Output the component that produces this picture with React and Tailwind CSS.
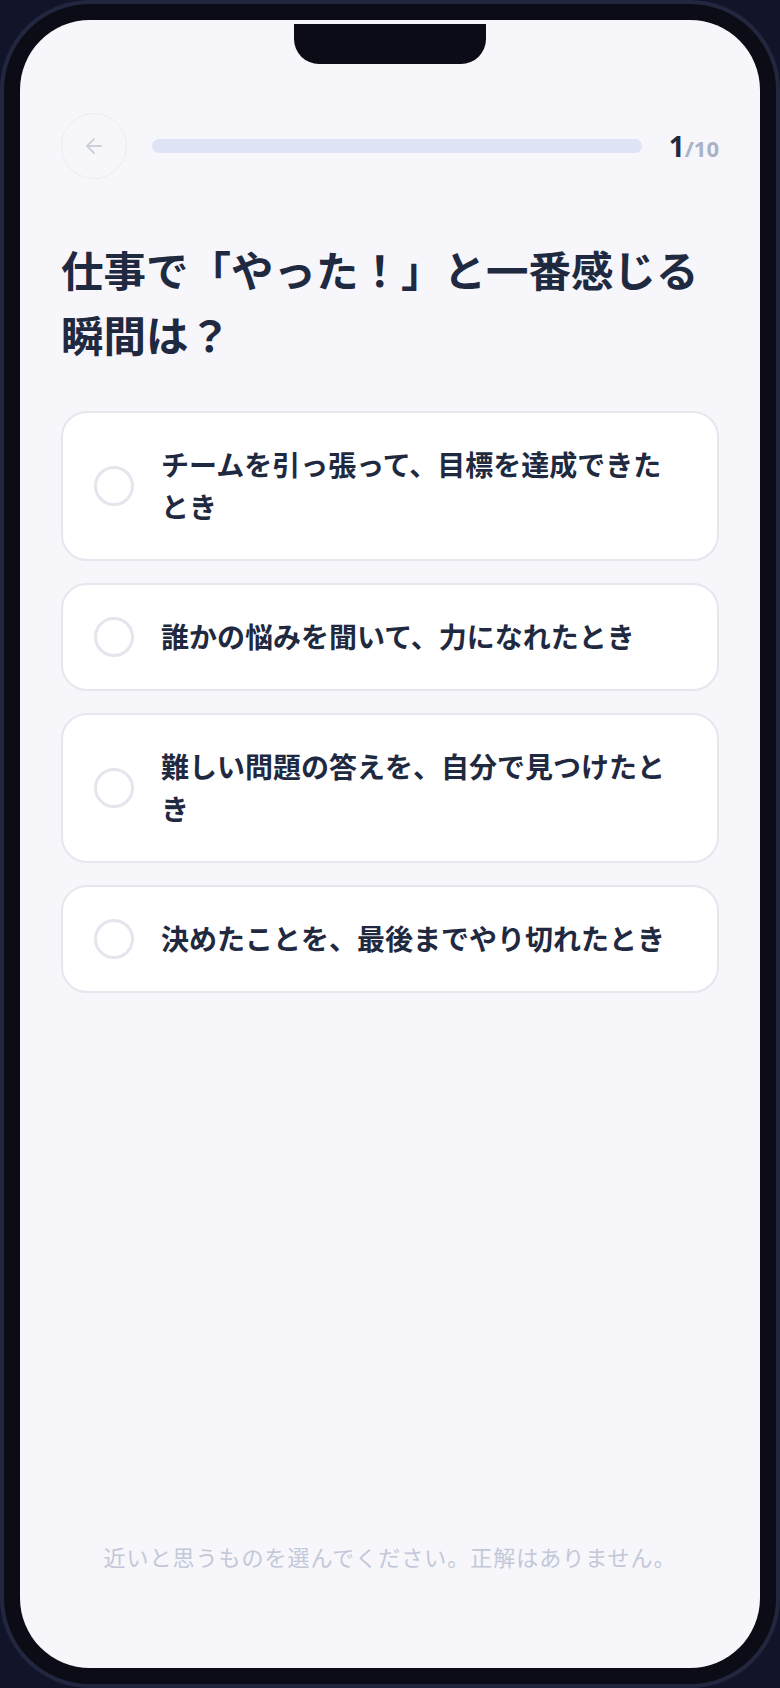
import { ArrowLeft } from "lucide-react";

const options = [
  "チームを引っ張って、目標を達成できたとき",
  "誰かの悩みを聞いて、力になれたとき",
  "難しい問題の答えを、自分で見つけたとき",
  "決めたことを、最後までやり切れたとき",
];

const jp = { fontFamily: '"Noto Sans", "Noto Sans CJK JP", sans-serif' };

function OptionCard({ label }) {
  return (
    <button
      type="button"
      className="flex w-full items-center rounded-[26px] border-2 border-[#e6e6ef] bg-white py-[31px] pl-[31px] pr-[31px] text-left"
    >
      <span className="h-[40px] w-[40px] shrink-0 rounded-full border-[3px] border-[#e5e5ee]" />
      <span className="ml-[27px] text-[28px] font-bold leading-[42px] text-[#1f2940]">{label}</span>
    </button>
  );
}

export default function App() {
  return (
    <div className="min-h-screen bg-[#12152a]" style={jp}>
      <div className="h-[1688px] w-[780px] rounded-[90px] border-4 border-[#23263f] bg-[#0b0c15] p-4">
        <div className="relative flex h-full flex-col overflow-hidden rounded-[70px] bg-[#f6f6fb]">
          {/* notch */}
          <div className="absolute left-[274px] top-1 h-10 w-[192px] rounded-b-[25px] bg-[#0b0c15]" />

          <div className="px-[41px] pt-[93px]">
            <div className="flex items-center">
              <button
                type="button"
                className="flex h-[66px] w-[66px] shrink-0 items-center justify-center rounded-full border border-[#ececf2] bg-[#f7f7fa]"
              >
                <ArrowLeft size={24} strokeWidth={2} className="text-[#cdd1dc]" />
              </button>
              <div className="ml-[25px] h-[14px] flex-1 rounded-full bg-[#dfe4f5]" />
              <p className="ml-[27px] font-bold leading-none">
                <span className="text-[28px] text-[#1f2940]">1</span>
                <span className="text-[22px] text-[#aab2c7]">/10</span>
              </p>
            </div>

            <h1 className="mt-[59px] text-[42.5px] font-bold leading-[65px] text-[#1f2940]">
              仕事で「やった！」と一番感じる瞬間は？
            </h1>

            <div className="mt-[43px] flex flex-col gap-[22px]">
              {options.map((option) => (
                <OptionCard key={option} label={option} />
              ))}
            </div>
          </div>

          <p className="mt-auto pb-[95px] text-center text-[22px] leading-[31px] tracking-[1px] text-[#c3c8d8]">
            近いと思うものを選んでください。正解はありません。
          </p>
        </div>
      </div>
    </div>
  );
}
